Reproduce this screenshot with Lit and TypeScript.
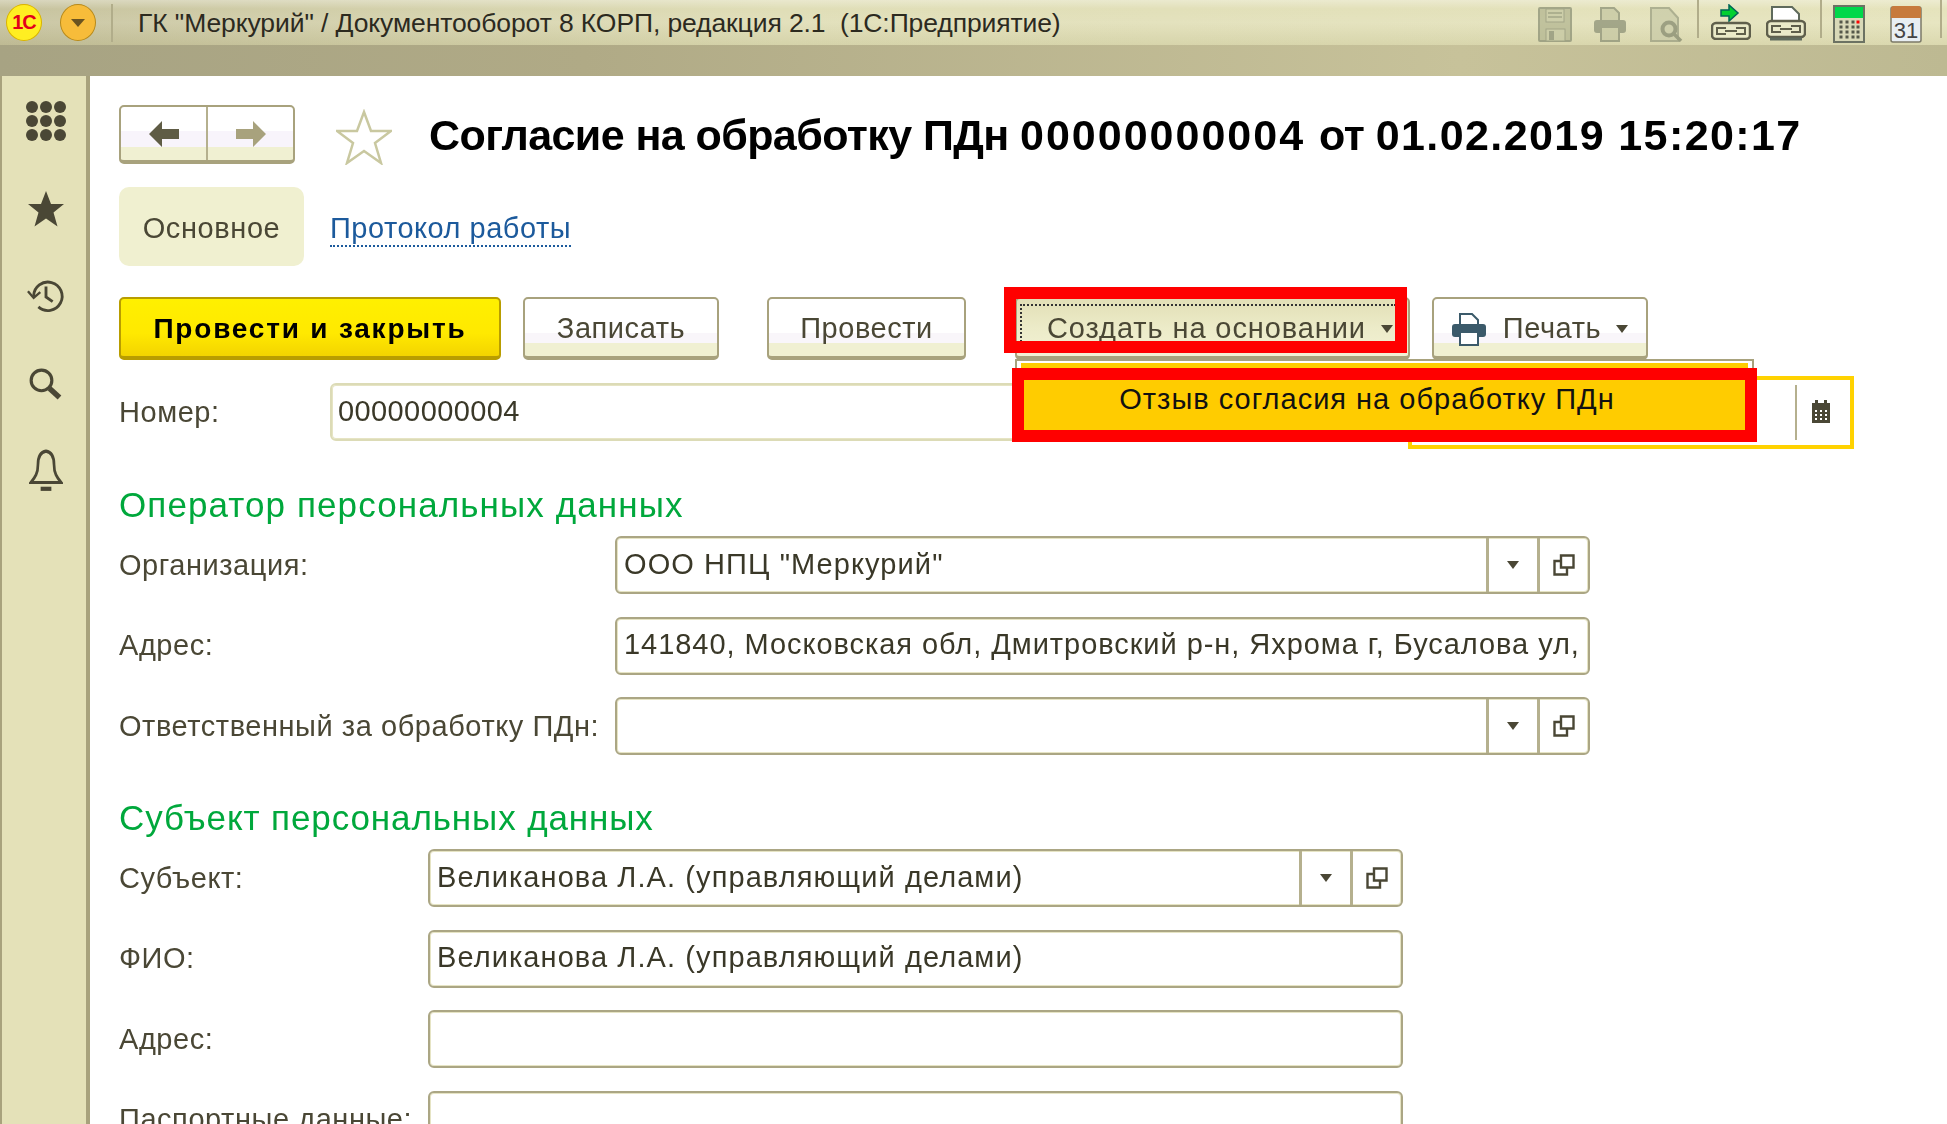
import { LitElement, html, css, svg } from "lit";
import { customElement } from "lit/decorators.js";

const dd = svg`<svg class="tri" width="14" height="8" viewBox="0 0 14 8"><path d="M1 0h12L7 8z" fill="#4a4735"/></svg>`;
const open = html`<svg width="22" height="22" viewBox="0 0 22 22" fill="none" stroke="#4a4735" stroke-width="2.4"><path d="M8 1.500h12.500v12H8z"/><path d="M8 7H1.500v13.500h12.500V14"/></svg>`;

const tbIcons = [
  svg`<rect x="1" y="1" width="32" height="33" rx="1" fill="#b4b792" stroke="#8d9277" stroke-width="2"/><rect x="8" y="2" width="18" height="13" fill="#c6c8a3" stroke="#8d9277"/><path d="M10 6h14M10 10h14" stroke="#8d9277" stroke-width="1.500"/><rect x="8" y="22" width="19" height="12" fill="#c6c8a3" stroke="#8d9277"/><rect x="11" y="24" width="5" height="9" fill="#8d9277"/>`,
  svg`<path d="M8 14V1h13l5 5v8" fill="#c6c8a3" stroke="#8d9277" stroke-width="2"/><rect x="1" y="13" width="32" height="13" rx="3" fill="#8d9277"/><rect x="8" y="20" width="18" height="14" fill="#c6c8a3" stroke="#8d9277" stroke-width="2"/>`,
  svg`<path d="M1 1h18l9 10v23H1z" fill="#c9cba8" stroke="#9b9f82" stroke-width="2"/><circle cx="19" cy="22" r="6.500" fill="#c9cba8" stroke="#858a6f" stroke-width="4"/><path d="M24 27l7 7" stroke="#858a6f" stroke-width="3.500"/>`,
];

const linkShape = (y: number) => svg`<rect x="1" y="${y}" width="38" height="16" rx="4" fill="#e9e9c8" stroke="#5f5f4c" stroke-width="2.500"/><path d="M15 ${y + 5}H6v6h9M25 ${y + 5}h9v6h-9" fill="none" stroke="#5f5f4c" stroke-width="2"/><path d="M14 ${y + 8}h12" stroke="#5f5f4c" stroke-width="2"/>`;

const icons = {
  grid: html`<svg width="40" height="40" viewBox="0 0 40 40" fill="#4a4735">${[6, 20, 34].flatMap((y) => [6, 20, 34].map((x) => svg`<circle cx="${x}" cy="${y}" r="6"/>`))}</svg>`,
  star: html`<svg width="38" height="38" viewBox="0 0 38 38"><path d="M19 1l5 13h13l-10.500 8.500 4 14L19 28.500 7.500 36.500l4-14L1 14h13z" fill="#4a4735"/></svg>`,
  hist: html`<svg width="40" height="38" viewBox="0 0 42 40" fill="none" stroke="#4a4735" stroke-width="3"><path d="M8 20a15 15 0 1 1 5 11.500"/><path d="M2 15l6 7 7-6" stroke-width="2.500"/><path d="M21 10v11l7 5"/></svg>`,
  search: html`<svg width="36" height="36" viewBox="0 0 40 38" fill="none" stroke="#4a4735"><circle cx="15" cy="15" r="11.500" stroke-width="3.500"/><path d="M24 24l11 10" stroke-width="6"/></svg>`,
  bell: html`<svg width="34" height="44" viewBox="0 0 38 42" preserveAspectRatio="none" fill="none" stroke="#4a4735" stroke-width="3"><path d="M19 2c-7 1-9 7-9 13 0 8-3 12-8 17h34c-5-5-8-9-8-17 0-6-2-12-9-13z"/><path d="M13 38h12" stroke-width="4"/></svg>`,
};

@customElement("app-root")
export class AppRoot extends LitElement {
  static styles = css`
    :host { display: block; width: 1947px; height: 1124px; overflow: hidden; position: relative; background: #fff;
      font-family: "Liberation Sans", Arial, sans-serif; color: #4a4735; }
    .blur { filter: blur(0.55px); width: 1947px; height: 1124px; position: relative; overflow: hidden; }
    .top { height: 45px; display: flex; align-items: center; background: linear-gradient(rgba(255,255,255,.35), rgba(255,255,255,.05) 20%, rgba(255,255,255,.12) 50%, rgba(150,145,100,.12)), linear-gradient(90deg, #c4c09a, #dedcb3 40%, #e4e2b9); position: relative; }
    .band { height: 31px; background: linear-gradient(90deg, #a7a383, #b0aa86 30%, #c7c29a 75%, #bdb992); }
    .logo { margin-left: 6px; width: 36px; height: 37px; border-radius: 50%; background: #ffee22; border: 1px solid #d9b300; display: flex; align-items: center; justify-content: center; flex: none; box-sizing: border-box; color: #e3001b; font-size: 20px; font-weight: 700; letter-spacing: -1px; }
    .menu { margin-left: 18px; width: 36px; height: 37px; border-radius: 50%; background: #f7bc3a; border: 1px solid #b78a1c; display: flex; align-items: center; justify-content: center; flex: none; box-sizing: border-box; }
    .vsep { width: 2px; height: 38px; background: #b1ad8a; flex: none; }
    .vs1 { margin-left: 15px; }
    .abs { position: absolute; top: 0; }
    .wintitle { margin-left: 25px; padding-top: 2px; font-size: 26.500px; color: #2c2a1f; white-space: pre; width: 1300px; flex: none; letter-spacing: -0.1px; }
    .tb-ic { flex: none; display: block; position: absolute; }
    .dim { opacity: 0.75; top: 7px; }
    .body { display: flex; height: 1048px; }
    .side { width: 80px; flex: none; background: #e4e1b8; border-left: 2px solid #a8a27d; border-right: 4px solid #a8a27d; display: flex; flex-direction: column; align-items: center; padding: 25px 0 0 4px; box-sizing: content-box; }
    .side > * { flex: none; }
    .si2 { margin-top: 45px; }
    .si3 { margin-top: 45px; }
    .si4 { margin-top: 47px; }
    .si5 { margin-top: 43px; }
    .main { flex: 1; min-width: 0; padding: 29px 0 0 29px; }
    .head { display: flex; align-items: center; height: 59px; }
    .nav { width: 176px; height: 59px; box-sizing: border-box; border: 2px solid #a8a27d; border-bottom-width: 4px; border-radius: 5px; display: flex; background: linear-gradient(#fff 0 45%, #f8f4fb 45% 75%, #f0f0d2 75%); flex: none; }
    .nav div { flex: 1; display: flex; align-items: center; justify-content: center; }
    .nav div + div { border-left: 2px solid #b5b08e; }
    .fav { margin-left: 41px; margin-top: 4px; flex: none; }
    h1 { margin: 0 0 0 37px; padding-top: 2px; font-size: 43px; font-weight: 700; color: #000; white-space: nowrap; line-height: 57px; }
    .t1 { letter-spacing: -0.58px; }
    .t2 { letter-spacing: 2px; }
    .t3 { letter-spacing: -0.5px; }
    .t4 { letter-spacing: 1.400px; }
    .tabs { display: flex; align-items: center; margin-top: 23px; height: 79px; }
    .tab { width: 185px; height: 79px; border-radius: 10px; background: #f0f0d0; display: flex; align-items: center; justify-content: center; font-size: 29px; letter-spacing: 0.6px; padding-top: 3px; box-sizing: border-box; }
    .link { margin-left: 26px; margin-top: 6px; font-size: 29px; color: #1c5a9c; letter-spacing: 0.5px; border-bottom: 2px dotted #1c5a9c; line-height: 33px; }
    .btns { display: flex; margin-top: 31px; height: 63px; }
    .btn { box-sizing: border-box; height: 63px; border: 2px solid #a8a27d; border-bottom-width: 4px; border-radius: 5px; background: linear-gradient(#fff 0 60%, #f9f6fa 60% 78%, #f0f0d2 78%); font-size: 29px; letter-spacing: 0.55px; display: flex; align-items: center; justify-content: center; flex: none; padding-top: 2px; }
    .primary { width: 382px; background: linear-gradient(#fff000, #ffe900 60%, #f3d400); border-color: #b89d00; color: #000; font-weight: 700; font-size: 28px; letter-spacing: 1.800px; }
    .b2 { width: 196px; margin-left: 22px; }
    .b3 { width: 199px; margin-left: 48px; }
    .b4 { width: 395px; margin-left: 49px; background: linear-gradient(#e2dfb6, #ecebc8 50%, #f2f1d5); justify-content: flex-start; padding-left: 30px; letter-spacing: 0.9px; }
    .b5 { width: 216px; margin-left: 22px; }
    .b5 svg:first-child { margin-right: 16px; }
    .tri { margin-left: 14px; }
    .numrow { display: flex; align-items: center; margin-top: 23px; height: 58px; }
    .lbl { font-size: 29px; letter-spacing: 0.55px; flex: none; white-space: nowrap; }
    .num { width: 211px; }
    .field { box-sizing: border-box; height: 58px; border: 2px solid #aba684; box-shadow: inset 0 0 0 1px #e6e4c4; border-radius: 6px; background: #fff; display: flex; align-items: center; font-size: 29px; color: #3a3828; letter-spacing: 1.080px; white-space: nowrap; overflow: hidden; flex: none; padding-left: 7px; padding-bottom: 2px; }
    .addr { letter-spacing: 0.950px; }
    .n { width: 1078px; border-color: #dcdbb6; padding-left: 6px; letter-spacing: 0.4px; }
    .date { box-sizing: border-box; width: 446px; height: 73px; margin: 0; border: 4px solid #ffd200; flex: none; display: flex; align-items: center; justify-content: flex-end; background: #fff; }
    .date i { display: block; width: 2px; height: 55px; background: #b5b08e; margin-right: 14px; }
    .date svg { margin-right: 19px; }
    h2 { margin: 44px 0 11px; font-size: 35px; line-height: 40px; font-weight: 400; color: #00a83c; letter-spacing: 1.100px; white-space: nowrap; }
    .b h2 { margin-top: 43px; letter-spacing: 0.9px; }
    .row { display: flex; align-items: center; height: 58px; margin-bottom: 22.600px; }
    .a .lbl { width: 496px; }
    .b .lbl { width: 309px; }
    .f { width: 975px; }
    .btnf { padding-right: 0; padding-bottom: 0; }
    .btnf .v { flex: 1; padding-bottom: 2px; overflow: hidden; }
    .cell { width: 48px; height: 100%; box-sizing: content-box; border-left: 3px solid #b5b08e; display: flex; align-items: center; justify-content: center; flex: none; }
    .cell .tri { margin: 0; }
    .red { position: absolute; box-sizing: border-box; border: 12px solid #ff0000; }
    .r1 { left: 1004px; top: 287px; width: 403px; height: 66px; }
    .popup { position: absolute; left: 1015px; top: 359px; width: 739px; height: 20px; box-sizing: border-box; border: 2px solid #a8a27d; border-bottom: 0; background: #fff; padding: 2px 4px 0; }
    .popup div { height: 100%; background: #ffcc00; }
    .r2 { left: 1012px; top: 368px; width: 745px; height: 74px; background: #ffcc00; font-size: 29px; color: #111; letter-spacing: 1px; text-align: center; line-height: 38px; padding-right: 35px; white-space: nowrap; }
    .focus { position: absolute; left: 1020px; top: 304px; width: 374px; height: 36px; border-top: 2px dotted #333; border-left: 2px dotted #333; pointer-events: none; }
    .p0 { left: 1538px; } .p1 { left: 1593px; } .p2 { left: 1650px; }
    .l1 { left: 1711px; top: 4px; } .l2 { left: 1766px; top: 6px; }
    .s1 { left: 1697px; } .s2 { left: 1820px; } .s3 { left: 1940px; }
    .calc { left: 1833px; top: 5px; } .cal { left: 1890px; top: 4px; }
  `;

  field(v: string, cls = "f", btn = true) {
    return html`<div class="field ${cls} ${btn ? "btnf" : ""}"><span class="v">${v}</span>${btn ? html`<span class="cell">${dd}</span><span class="cell">${open}</span>` : ""}</div>`;
  }

  render() {
    return html`<div class="blur">
      <div class="top">
        <div class="logo">1С</div>
        <div class="menu"><svg width="14" height="8" viewBox="0 0 14 8"><path d="M0 0h14L7 8z" fill="#6a5320"/></svg></div>
        <div class="vsep vs1"></div>
        <div class="wintitle">ГК "Меркурий" / Документооборот 8 КОРП, редакция 2.1  (1С:Предприятие)</div>
        ${tbIcons.map((t, i) => html`<svg class="tb-ic dim p${i}" width="34" height="35" viewBox="0 0 34 35">${t}</svg>`)}
        <div class="vsep abs s1"></div>
        <svg class="tb-ic l1" width="40" height="36" viewBox="0 0 40 36">
          <path d="M10 6h8V1l9 8-9 8v-5h-8z" fill="#00d030" stroke="#065" stroke-width="1.500"/>
          ${linkShape(19)}
        </svg>
        <svg class="tb-ic l2" width="40" height="36" viewBox="0 0 40 36">
          <path d="M6 18V1h20l7 7v10" fill="#fff" stroke="#5f6a5c" stroke-width="2"/>
          ${linkShape(15)}
          <path d="M4 33h32" stroke="#5f6a5c" stroke-width="3"/>
        </svg>
        <div class="vsep abs s2"></div>
        <svg class="tb-ic calc" width="32" height="38" viewBox="0 0 32 38">
          <rect x="1" y="1" width="30" height="36" fill="#d9d9b8" stroke="#6c7263" stroke-width="2"/><rect x="2" y="2" width="28" height="11" fill="#00d84a"/>
          ${[17, 22, 27, 32].flatMap((y) => [8, 14, 20, 25].map((x) => svg`<rect x="${x - 1.5}" y="${y - 1.5}" width="3" height="3" fill="${x === 25 && y === 17 ? "#f00" : "#55584a"}"/>`))}
        </svg>
        <svg class="tb-ic cal" width="32" height="39" viewBox="0 0 32 39">
          <rect x="1" y="3" width="30" height="35" rx="2" fill="#e8eef2" stroke="#7c7a68" stroke-width="1.500"/><path d="M1 14V5a3 3 0 0 1 3-3h24a3 3 0 0 1 3 3v9z" fill="#c77a3c"/><text x="16" y="34" font-size="22" text-anchor="middle" font-family="Liberation Sans" fill="#444">31</text>
        </svg>
        <div class="vsep abs s3"></div>
      </div>
      <div class="band"></div>
      <div class="body">
        <div class="side">
          <div class="si1">${icons.grid}</div>
          <div class="si2">${icons.star}</div>
          <div class="si3">${icons.hist}</div>
          <div class="si4">${icons.search}</div>
          <div class="si5">${icons.bell}</div>
        </div>
        <div class="main">
          <div class="head">
            <div class="nav">
              <div><svg width="30" height="28" viewBox="0 0 30 28"><path d="M0 14L13 1v8h17v10H13v8z" fill="#5f5c45"/></svg></div>
              <div><svg width="30" height="28" viewBox="0 0 30 28"><path d="M30 14L17 1v8H0v10h17v8z" fill="#a8a27d"/></svg></div>
            </div>
            <svg class="fav" width="56" height="56" viewBox="0 0 56 56"><path d="M28 3l7 19h20L39 34l6 20-17-12-17 12 6-20L1 22h20z" fill="#fff" stroke="#c9c8a0" stroke-width="2.500"/></svg>
            <h1><span class="t1">Согласие на обработку ПДн </span><span class="t2">00000000004 </span><span class="t3">от </span><span class="t4">01.02.2019 15:20:17</span></h1>
          </div>
          <div class="tabs"><div class="tab">Основное</div><div class="link">Протокол работы</div></div>
          <div class="btns">
            <div class="btn primary">Провести и закрыть</div>
            <div class="btn b2">Записать</div>
            <div class="btn b3">Провести</div>
            <div class="btn b4">Создать на основании${dd}</div>
            <div class="btn b5"><svg width="36" height="34" viewBox="0 0 36 34"><path d="M9 14V2h12l6 6v6" fill="#fff" stroke="#3b5a6a" stroke-width="2"/><rect x="1" y="12" width="34" height="13" rx="3" fill="#3b5a6a"/><rect x="9" y="20" width="18" height="13" fill="#fff" stroke="#3b5a6a" stroke-width="2"/></svg>Печать${dd}</div>
          </div>
          <div class="numrow">
            <div class="lbl num">Номер:</div>
            ${this.field("00000000004", "n", false)}
            <div class="date"><i></i><svg width="20" height="24" viewBox="0 0 20 24"><rect x="1" y="3" width="18" height="20" fill="#4a4735"/><rect x="4" y="0" width="3" height="5" fill="#4a4735"/><rect x="13" y="0" width="3" height="5" fill="#4a4735"/>${[11, 15, 19].flatMap((y) => [5, 10, 15].map((x) => svg`<rect x="${x - 1}" y="${y - 1}" width="2" height="2" fill="#fff"/>`))}</svg></div>
          </div>
          <div class="a">
            <h2>Оператор персональных данных</h2>
            <div class="row"><div class="lbl">Организация:</div>${this.field('ООО НПЦ "Меркурий"')}</div>
            <div class="row"><div class="lbl">Адрес:</div>${this.field("141840, Московская обл, Дмитровский р-н, Яхрома г, Бусалова ул,", "f addr", false)}</div>
            <div class="row"><div class="lbl">Ответственный за обработку ПДн:</div>${this.field("")}</div>
          </div>
          <div class="b">
            <h2>Субъект персональных данных</h2>
            <div class="row"><div class="lbl">Субъект:</div>${this.field("Великанова Л.А. (управляющий делами)")}</div>
            <div class="row"><div class="lbl">ФИО:</div>${this.field("Великанова Л.А. (управляющий делами)", "f", false)}</div>
            <div class="row"><div class="lbl">Адрес:</div>${this.field("", "f", false)}</div>
            <div class="row"><div class="lbl">Паспортные данные:</div>${this.field("", "f", false)}</div>
          </div>
        </div>
      </div>
      <div class="focus"></div>
      <div class="red r1"></div>
      <div class="popup"><div></div></div>
      <div class="red r2">Отзыв согласия на обработку ПДн</div>
    </div>`;
  }
}
